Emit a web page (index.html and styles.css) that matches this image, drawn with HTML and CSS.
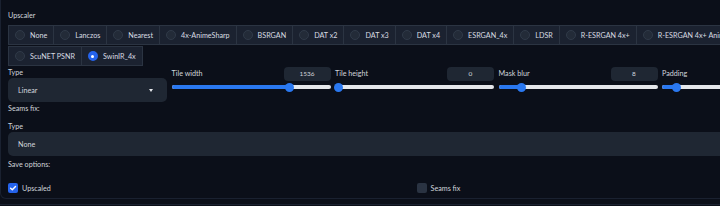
FILE: index.html
```html
<!DOCTYPE html>
<html lang="en">
<head>
<meta charset="utf-8">
<title>Upscaler</title>
<link rel="stylesheet" href="styles.css">
</head>
<body>
<div class="panel">
  <div class="label upscaler-label">Upscaler</div>
  <div class="radio-group">
    <div class="radio-row">
      <label class="radio"><span class="dot"></span>None</label>
      <label class="radio"><span class="dot"></span>Lanczos</label>
      <label class="radio"><span class="dot"></span>Nearest</label>
      <label class="radio"><span class="dot"></span>4x-AnimeSharp</label>
      <label class="radio"><span class="dot"></span>BSRGAN</label>
      <label class="radio"><span class="dot"></span>DAT x2</label>
      <label class="radio"><span class="dot"></span>DAT x3</label>
      <label class="radio"><span class="dot"></span>DAT x4</label>
      <label class="radio"><span class="dot"></span>ESRGAN_4x</label>
      <label class="radio"><span class="dot"></span>LDSR</label>
      <label class="radio"><span class="dot"></span>R-ESRGAN 4x+</label>
      <label class="radio"><span class="dot"></span>R-ESRGAN 4x+ Anime6B</label>
    </div>
    <div class="radio-row">
      <label class="radio"><span class="dot"></span>ScuNET PSNR</label>
      <label class="radio checked"><span class="dot"></span>SwinIR_4x</label>
    </div>
  </div>

  <div class="controls">
    <div class="col">
      <div class="label field-label">Type</div>
      <div class="dropdown"><span>Linear</span><span class="caret"></span></div>
    </div>
    <div class="col slider-col">
      <div class="slider-head"><span class="label">Tile width</span><span class="num">1536</span></div>
      <div class="track"><div class="fill" style="width:74.5%"></div><div class="thumb" style="left:74.5%"></div></div>
    </div>
    <div class="col slider-col">
      <div class="slider-head"><span class="label">Tile height</span><span class="num">0</span></div>
      <div class="track"><div class="fill" style="width:2%"></div><div class="thumb" style="left:2%"></div></div>
    </div>
    <div class="col slider-col">
      <div class="slider-head"><span class="label">Mask blur</span><span class="num">8</span></div>
      <div class="track"><div class="fill" style="width:14.5%"></div><div class="thumb" style="left:14.5%"></div></div>
    </div>
    <div class="col slider-col">
      <div class="slider-head"><span class="label">Padding</span><span class="num">32</span></div>
      <div class="track"><div class="fill" style="width:9%"></div><div class="thumb" style="left:9%"></div></div>
    </div>
  </div>

  <div class="label section-label">Seams fix:</div>
  <div class="label field-label type2">Type</div>
  <div class="dropdown wide"><span>None</span></div>

  <div class="label section-label save-label">Save options:</div>
  <div class="checks">
    <label class="check on"><span class="box"><svg viewBox="0 0 10 10" width="10" height="10"><path d="M2.6 5.2 L4.3 6.8 L7.5 3.4" fill="none" stroke="#fff" stroke-width="1.4" stroke-linecap="round" stroke-linejoin="round"/></svg></span>Upscaled</label>
    <label class="check"><span class="box"></span>Seams fix</label>
  </div>
</div>
<div class="next-panel"></div>
</body>
</html>
```
FILE: styles.css
```css
html, body {
  margin: 0;
  padding: 0;
  overflow: hidden;
  background: #0b0f19;
}
body {
  width: 720px;
  height: 206px;
  font-family: "Lato", "Noto Sans", sans-serif;
  font-size: 7.2px;
  color: #d1d5db;
}
.panel {
  width: 830px;
  box-sizing: border-box;
  padding: 0 0 6px 7px;
  border: 1px solid #1a2130;
  border-top: none;
  border-radius: 0 0 6px 6px;
  height: 199px;
}
.label {
  line-height: 10px;
  color: #d1d5db;
}
.upscaler-label {
  padding-top: 11px;
  height: 14px;
}
.radio-group {
  display: flex;
  flex-direction: column;
  gap: 1px;
}
.radio-row {
  display: flex;
}
.radio {
  display: flex;
  align-items: center;
  gap: 5px;
  height: 20px;
  box-sizing: border-box;
  padding: 0 6px 0 6px;
  background: #1b2230;
  border: 1px solid #2b3442;
  margin-right: -1px;
  white-space: nowrap;
  color: #d8dce2;
}
.dot {
  width: 10px;
  height: 10px;
  border-radius: 50%;
  background: #232b38;
  box-sizing: border-box;
  border: 1px solid #303a49;
  flex: none;
}
.radio.checked .dot {
  background: #2563eb;
  border: 3px solid #2563eb;
  position: relative;
}
.radio.checked .dot::after {
  content: "";
  position: absolute;
  left: 0.5px;
  top: 0.5px;
  width: 3px;
  height: 3px;
  border-radius: 50%;
  background: #fff;
}
.controls {
  display: flex;
  gap: 4.5px;
  width: 813px;
  margin-top: 1px;
}
.col {
  width: 159px;
  flex: none;
}
.field-label {
  padding-top: 1px;
}
.dropdown {
  height: 24px;
  border-radius: 5px;
  background: #1f2733;
  display: flex;
  align-items: center;
  justify-content: space-between;
  padding: 0 14px 0 10px;
  box-sizing: border-box;
  color: #d1d5db;
}
.caret {
  width: 0;
  height: 0;
  border-left: 2.5px solid transparent;
  border-right: 2.5px solid transparent;
  border-top: 3px solid #e5e7eb;
}
.slider-head {
  display: flex;
  justify-content: space-between;
  align-items: center;
  height: 14px;
}
.num {
  width: 47px;
  height: 14px;
  border-radius: 4px;
  background: #1f2733;
  text-align: center;
  line-height: 14px;
  font-size: 6.5px;
  color: #d1d5db;
}
.track {
  position: relative;
  height: 4px;
  margin-top: 4px;
  border-radius: 2px;
  background: #e5e7eb;
}
.fill {
  height: 4px;
  border-radius: 2px;
  background: #2a78f0;
}
.thumb {
  position: absolute;
  top: -2.5px;
  width: 9px;
  height: 9px;
  margin-left: -4.5px;
  border-radius: 50%;
  background: #2a78f0;
}
.section-label {
  margin-top: 2px;
  height: 10px;
}
.save-label {
  margin-top: 4px;
}
.type2 {
  margin-top: 7px;
}
.dropdown.wide {
  width: 813px;
  margin-bottom: 2px;
}
.checks {
  display: flex;
  gap: 4.5px;
  width: 813px;
  margin-top: 12px;
}
.check {
  width: 404px;
  flex: none;
  display: flex;
  align-items: center;
  gap: 4px;
  height: 12px;
  color: #d1d5db;
}
.box {
  width: 10px;
  height: 10px;
  border-radius: 2px;
  background: #2a3342;
  display: flex;
  align-items: center;
  justify-content: center;
  flex: none;
}
.check.on .box {
  background: #2563eb;
}
.next-panel {
  margin-top: 5px;
  height: 10px;
  border-top: 1px solid #1a2130;
}
```
